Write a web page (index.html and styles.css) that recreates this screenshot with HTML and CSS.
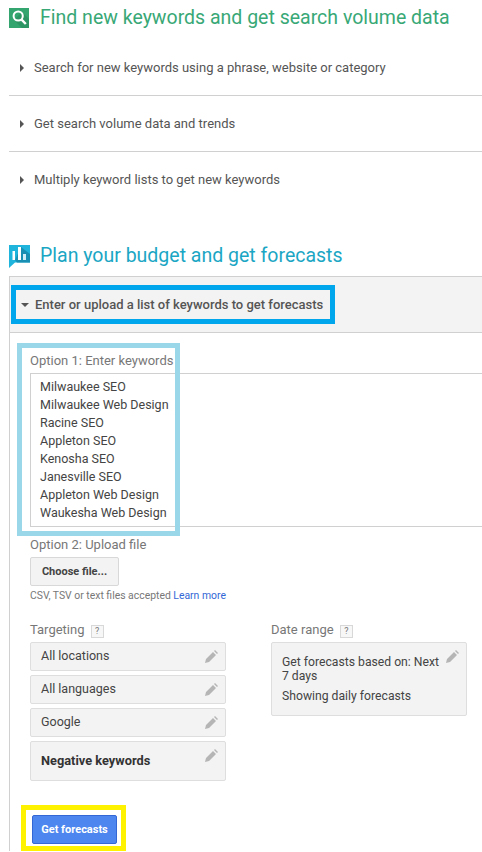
FILE: index.html
```html
<!DOCTYPE html>
<html lang="en">
<head>
<meta charset="UTF-8" />
<meta name="viewport" content="width=device-width, initial-scale=1" />
<title>Keyword Planner</title>
<link rel="stylesheet" href="styles.css">
</head>
<body>

<section class="find">
  <h2 class="heading heading-green">
    <svg class="heading-icon" width="20" height="20" viewBox="0 0 20 20">
      <rect width="20" height="20" fill="#34a56f" />
      <path d="M5 12l8-8 7 7v9h-7z" fill="#2d9463" />
      <circle cx="9.2" cy="8" r="4.6" fill="none" stroke="#fff" stroke-width="2" />
      <path d="M12.4 11.4l4.4 4.6" stroke="#fff" stroke-width="2.4" />
    </svg>
    Find new keywords and get search volume data
  </h2>
  <div class="option-row"><span class="arrow-right"></span>Search for new keywords using a phrase, website or category</div>
  <div class="option-row"><span class="arrow-right"></span>Get search volume data and trends</div>
  <div class="option-row"><span class="arrow-right"></span>Multiply keyword lists to get new keywords</div>
</section>

<section class="plan">
  <h2 class="heading heading-teal">
    <svg class="heading-icon" width="21" height="23" viewBox="0 0 21 23">
      <path d="M0 0h21v17.500H6l-6 5.500z" fill="#1fb4dc" />
      <path d="M6 15l6-13 9 7v8.500H8z" fill="#1a8fb4" />
      <rect x="3.500" y="6" width="2.500" height="9" fill="#fff" />
      <rect x="9" y="2" width="3" height="13" fill="#fff" />
      <rect x="14" y="9" width="3" height="6" fill="#cfeef7" />
    </svg>
    Plan your budget and get forecasts
  </h2>

  <div class="panel">
    <div class="panel-head">
      <div class="head-frame"><span class="arrow-down"></span>Enter or upload a list of keywords to get forecasts</div>
    </div>

    <div class="panel-body">
      <div class="keywords-frame"></div>
      <div class="field-label">Option 1: Enter keywords</div>
      <div class="keyword-list">
        <div>Milwaukee SEO</div>
        <div>Milwaukee Web Design</div>
        <div>Racine SEO</div>
        <div>Appleton SEO</div>
        <div>Kenosha SEO</div>
        <div>Janesville SEO</div>
        <div>Appleton Web Design</div>
        <div>Waukesha Web Design</div>
      </div>

      <div class="field-label upload-label">Option 2: Upload file</div>
      <button class="file-btn">Choose file...</button>
      <div class="file-note">CSV, TSV or text files accepted <a href="#">Learn more</a></div>

      <div class="settings">
        <div class="settings-col">
          <div class="field-label">Targeting <span class="help">?</span></div>
          <div class="setting-box">All locations
            <svg class="pencil" width="13" height="13" viewBox="0 0 13 13"><path d="M0 13l1-4 7-7 3 3-7 7zM9 1l1-1 3 3-1 1z" fill="#b5b5b5" /></svg>
          </div>
          <div class="setting-box">All languages
            <svg class="pencil" width="13" height="13" viewBox="0 0 13 13"><path d="M0 13l1-4 7-7 3 3-7 7zM9 1l1-1 3 3-1 1z" fill="#b5b5b5" /></svg>
          </div>
          <div class="setting-box">Google
            <svg class="pencil" width="13" height="13" viewBox="0 0 13 13"><path d="M0 13l1-4 7-7 3 3-7 7zM9 1l1-1 3 3-1 1z" fill="#b5b5b5" /></svg>
          </div>
          <div class="setting-box setting-negative">Negative keywords
            <svg class="pencil" width="13" height="13" viewBox="0 0 13 13"><path d="M0 13l1-4 7-7 3 3-7 7zM9 1l1-1 3 3-1 1z" fill="#b5b5b5" /></svg>
          </div>
        </div>
        <div class="settings-col">
          <div class="field-label">Date range <span class="help">?</span></div>
          <div class="date-box">
            <p>Get forecasts based on: Next 7 days</p>
            <p>Showing daily forecasts</p>
            <svg class="pencil" width="13" height="13" viewBox="0 0 13 13"><path d="M0 13l1-4 7-7 3 3-7 7zM9 1l1-1 3 3-1 1z" fill="#b5b5b5" /></svg>
          </div>
        </div>
      </div>

      <div class="submit-frame"><button class="submit-btn">Get forecasts</button></div>
    </div>
  </div>
</section>

</body>
</html>
```

FILE: styles.css
```css
html, body {
  height: 852px;
  overflow: hidden;
}
body {
  margin: 0;
  background: #fff;
  font-family: Roboto, "Liberation Sans", sans-serif;
  color: #444;
}
.heading {
  display: flex;
  align-items: center;
  margin: 0;
  font-size: 19.5px;
  font-weight: 400;
  line-height: 24px;
  white-space: nowrap;
}
.heading-icon {
  flex: none;
  margin-right: 11px;
}
.heading-green {
  color: #38a876;
  padding: 6px 0 0 9px;
}
.heading-teal {
  color: #1ba6c4;
  padding-left: 9px;
}
.heading-teal .heading-icon {
  margin-right: 10px;
}
.find {
  height: 244px;
}
.option-row {
  display: flex;
  align-items: center;
  margin-left: 9px;
  padding-left: 11px;
  height: 55px;
  border-bottom: 1px solid #d0d0d0;
  font-size: 13px;
  color: #555;
}
.option-row:first-of-type {
  margin-top: 10px;
}
.option-row:last-child {
  border-bottom: none;
}
.arrow-right {
  width: 0;
  height: 0;
  margin-right: 10px;
  border-left: 4px solid #555;
  border-top: 4px solid transparent;
  border-bottom: 4px solid transparent;
}
.arrow-down {
  width: 0;
  height: 0;
  margin-right: 6px;
  border-top: 4px solid #555;
  border-left: 4px solid transparent;
  border-right: 4px solid transparent;
}
.panel {
  margin: 8px 0 0 9px;
  border-left: 1px solid #d0d0d0;
  border-top: 1px solid #d0d0d0;
}
.panel-head {
  height: 56px;
  padding: 8px 0 0 1px;
  box-sizing: border-box;
  background: #f3f3f3;
  border-bottom: 1px solid #d0d0d0;
}
.head-frame {
  display: inline-flex;
  align-items: center;
  box-sizing: border-box;
  width: 324px;
  height: 39px;
  padding-left: 5px;
  border: 5px solid #00a6ec;
  font-size: 13px;
  font-weight: 500;
  color: #555;
  white-space: nowrap;
}
.panel-body {
  position: relative;
  padding: 20px 0 0 20px;
}
.keywords-frame {
  position: absolute;
  left: 7px;
  top: 10px;
  width: 163px;
  height: 193px;
  box-sizing: border-box;
  border: 5px solid #9ad8e9;
}
.field-label {
  font-size: 13px;
  line-height: 15px;
  color: #777;
}
.keyword-list {
  box-sizing: border-box;
  height: 154px;
  margin-top: 5px;
  padding: 4px 0 0 9px;
  border: 1px solid #d0d0d0;
  border-right: none;
  font-size: 12.5px;
  line-height: 18px;
  color: #444;
}
.upload-label {
  margin-top: 10px;
}
.file-btn {
  display: block;
  width: 89px;
  height: 29px;
  margin-top: 5px;
  padding: 0;
  border: 1px solid #d8d8d8;
  border-radius: 2px;
  background: #f3f3f3;
  font: 700 11px Roboto, "Liberation Sans", sans-serif;
  color: #444;
}
.file-note {
  margin-top: 3px;
  font-size: 10.4px;
  line-height: 14px;
  color: #777;
}
.file-note a {
  color: #3367d6;
  text-decoration: none;
}
.settings {
  display: flex;
  gap: 45px;
  margin-top: 19px;
}
.settings-col {
  width: 196px;
}
.help {
  display: inline-block;
  box-sizing: border-box;
  width: 13px;
  height: 13px;
  margin-left: 3px;
  border: 1px solid #d8d8d8;
  background: #f7f7f7;
  font-size: 9px;
  line-height: 11px;
  text-align: center;
  vertical-align: 0;
}
.setting-box {
  position: relative;
  display: flex;
  align-items: center;
  box-sizing: border-box;
  height: 29px;
  margin-bottom: 4px;
  padding: 0 0 3px 10px;
  border: 1px solid #dedede;
  border-radius: 2px;
  background: #f3f3f3;
  font-size: 12.5px;
  color: #444;
}
.settings-col .field-label {
  margin-bottom: 4px;
}
.setting-negative {
  height: 40px;
  padding-bottom: 2px;
  font-size: 12.8px;
  font-weight: 700;
  color: #333;
}
.pencil {
  position: absolute;
  top: 7px;
  right: 7px;
}
.date-box {
  position: relative;
  box-sizing: border-box;
  height: 74px;
  padding: 12px 20px 0 10px;
  border: 1px solid #dedede;
  border-radius: 2px;
  background: #f3f3f3;
  font-size: 12.2px;
  line-height: 14px;
  color: #444;
}
.date-box p {
  margin: 0 0 6px;
}
.submit-frame {
  display: inline-block;
  margin: 20px 0 0 -9px;
  padding: 5px 4px 2px 6px;
  border: 5px solid #fff200;
}
.submit-btn {
  display: block;
  width: 85px;
  height: 29px;
  padding: 0;
  border: 1px solid #3367d6;
  border-radius: 2px;
  background: #4d86ee;
  font: 700 11px Roboto, "Liberation Sans", sans-serif;
  color: #fff;
}
```
